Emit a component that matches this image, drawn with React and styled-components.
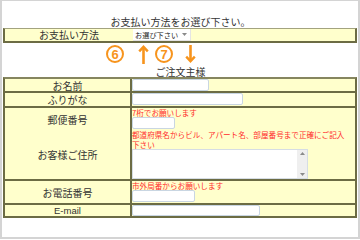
import styled, { createGlobalStyle } from "styled-components";

const GlobalStyle = createGlobalStyle`
  body {
    margin: 0;
    background: #fff;
    font-family: "Noto Sans CJK JP", "Noto Sans", sans-serif;
    color: #333;
  }
`;

const ORANGE = "#f7941d";
const LINE = "#6c6c44";
const CELL_BG = "#ffffcc";

const Frame = styled.div`
  width: 360px;
  height: 239px;
  box-sizing: border-box;
  border: 2px solid #d4d4d4;
  border-top-width: 1px;
  padding-left: 1px;
  background: #fff;
`;

const Title = styled.div`
  height: 27px;
  box-sizing: border-box;
  padding-top: 15px;
  line-height: 12px;
  font-size: 10px;
  text-align: center;
  color: #333;
`;

const PayTable = styled.div`
  width: 354px;
  height: 15px;
  box-sizing: border-box;
  display: grid;
  grid-template-columns: 128px 1fr;
  background: ${CELL_BG};
  border: 2px solid ${LINE};
  border-top: 1px solid #a3a37f;
`;

const PayLabel = styled.div`
  font-size: 10px;
  line-height: 12px;
  text-align: center;
  color: #333;
`;

const FakeSelect = styled.div`
  width: 58px;
  height: 12px;
  box-sizing: border-box;
  display: flex;
  align-items: center;
  justify-content: space-between;
  padding: 0 3px 0 2px;
  background: #fff;
  border-right: 1px solid #e4e4e4;
  border-bottom: 1px solid #e4e4e4;
  font-size: 7.2px;
  color: #222;
`;

const Annotations = styled.div`
  height: 23px;
  display: flex;
  align-items: flex-start;
  padding-left: 103px;
`;

const Circled = styled.span`
  width: 18px;
  height: 18px;
  box-sizing: border-box;
  margin-top: 2px;
  margin-right: ${(p) => p.$after}px;
  border: 2px solid ${ORANGE};
  border-radius: 50%;
  display: flex;
  align-items: center;
  justify-content: center;
  font-family: "Liberation Sans", Arial, sans-serif;
  font-weight: bold;
  font-size: 13px;
  color: ${ORANGE};
`;

const Arrow = styled.svg`
  margin-top: 2px;
  margin-right: ${(p) => p.$after || 0}px;
  flex-shrink: 0;
`;

const Heading = styled.div`
  height: 11px;
  line-height: 11px;
  font-size: 10px;
  text-align: center;
  color: #333;
`;

const MainTable = styled.div`
  width: 354px;
  box-sizing: border-box;
  display: grid;
  grid-template-columns: 127px 1fr;
  background: ${CELL_BG};
  border: 2px solid ${LINE};
  border-top-color: #86865f;
`;

const Label = styled.div`
  height: ${(p) => p.$h}px;
  border-right: 2px solid ${LINE};
  border-bottom: ${(p) => (p.$open ? "none" : `2px solid ${LINE}`)};
  display: flex;
  align-items: center;
  justify-content: center;
  font-size: ${(p) => (p.$latin ? "9.5px" : "10px")};
  font-family: ${(p) =>
    p.$latin ? '"Liberation Sans", Arial, sans-serif' : "inherit"};
  color: #333;
`;

const Value = styled.div`
  height: ${(p) => p.$h}px;
  border-bottom: ${(p) => (p.$open ? "none" : `2px solid ${LINE}`)};
  display: flex;
  flex-direction: column;
  align-items: flex-start;
`;

const Note = styled.div`
  font-size: 7.6px;
  line-height: ${(p) => (p.$lines ? "9.5px" : "9px")};
  color: #ff2b2b;
  white-space: nowrap;
`;

const TextInput = styled.input`
  width: ${(p) => p.$w}px;
  height: ${(p) => p.$h || 12}px;
  box-sizing: border-box;
  margin: 0;
  padding: 0 2px;
  border: 1px solid #c9d6e2;
  border-radius: 2px;
  background: #fff;
  outline: none;
`;

const AreaBox = styled.div`
  width: 176px;
  height: 30px;
  box-sizing: border-box;
  display: flex;
  border: 1px solid #d6dde4;
  background: #fff;
`;

const Area = styled.textarea`
  flex: 1;
  margin: 0;
  padding: 0;
  border: none;
  resize: none;
  outline: none;
  background: transparent;
`;

const Scroll = styled.div`
  width: 10px;
  background: #efefef;
  display: flex;
  flex-direction: column;
  align-items: center;
  justify-content: space-between;
  padding: 2px 0;
  box-sizing: border-box;
`;

const Tri = ({ down }) => (
  <svg width="5" height="3" viewBox="0 0 5 3">
    <path d={down ? "M0 0h5L2.5 3z" : "M0 3h5L2.5 0z"} fill="#8a8a8a" />
  </svg>
);

const UpArrow = (props) => (
  <Arrow width="11" height="19" viewBox="0 0 11 19" {...props}>
    <path d="M5.5 2v17" stroke={ORANGE} strokeWidth="2.6" fill="none" />
    <path
      d="M1.2 6.3 5.5 1.8 9.8 6.3"
      stroke={ORANGE}
      strokeWidth="2.4"
      fill="none"
      strokeLinejoin="miter"
    />
  </Arrow>
);

const DownArrow = (props) => (
  <Arrow width="11" height="18" viewBox="0 0 11 18" {...props}>
    <path d="M5.5 0v16" stroke={ORANGE} strokeWidth="2.6" fill="none" />
    <path
      d="M1.2 11.7 5.5 16.2 9.8 11.7"
      stroke={ORANGE}
      strokeWidth="2.4"
      fill="none"
      strokeLinejoin="miter"
    />
  </Arrow>
);

export default function App() {
  return (
    <>
      <GlobalStyle />
      <Frame>
        <Title>お支払い方法をお選び下さい。</Title>
        <PayTable>
          <PayLabel>お支払い方法</PayLabel>
          <div>
            <FakeSelect>
              <span>お選び下さい</span>
              <Tri down />
            </FakeSelect>
          </div>
        </PayTable>

        <Annotations>
          <Circled $after={14}>6</Circled>
          <UpArrow $after={6} />
          <Circled $after={12}>7</Circled>
          <DownArrow />
        </Annotations>

        <Heading>ご注文主様</Heading>

        <MainTable>
          <Label $h={12}>お名前</Label>
          <Value $h={12}>
            <TextInput $w={77} />
          </Value>

          <Label $h={13}>ふりがな</Label>
          <Value $h={13}>
            <TextInput $w={111} />
          </Value>

          <Label $h={22} $open>郵便番号</Label>
          <Value $h={22} $open>
            <Note>7桁でお願いします</Note>
            <TextInput $w={43} />
          </Value>

          <Label $h={49}>お客様ご住所</Label>
          <Value $h={49}>
            <Note $lines>
              都道府県名からビル、アパート名、部屋番号まで正確にご記入
              <br />
              下さい
            </Note>
            <AreaBox>
              <Area />
              <Scroll>
                <Tri />
                <Tri down />
              </Scroll>
            </AreaBox>
          </Value>

          <Label $h={22}>お電話番号</Label>
          <Value $h={22}>
            <Note>市外局番からお願いします</Note>
            <TextInput $w={63} />
          </Value>

          <Label $h={11} $open $latin>E-mail</Label>
          <Value $h={11} $open>
            <TextInput $w={128} $h={11} />
          </Value>
        </MainTable>
      </Frame>
    </>
  );
}
